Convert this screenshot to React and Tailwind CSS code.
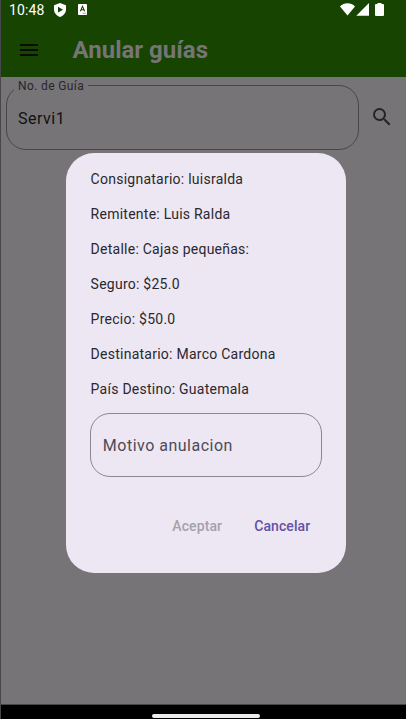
const details = [
  'Consignatario: luisralda',
  'Remitente: Luis Ralda',
  'Detalle: Cajas pequeñas:',
  'Seguro: $25.0',
  'Precio: $50.0',
  'Destinatario: Marco Cardona',
  'País Destino: Guatemala',
];

function StatusBar() {
  return (
    <div className="flex h-[22px] items-start justify-between pl-2 pr-[22px] text-white">
      <div className="flex items-start">
        <span className="w-[45px] pt-px text-[14px] leading-[19px] tracking-[0.1px]">10:48</span>
        <svg className="mt-[3px] h-[14px] w-3" viewBox="0 0 12 14">
          <path d="M6 0 12 2.2V6.5C12 10 9.5 12.8 6 14 2.5 12.8 0 10 0 6.5V2.2Z" fill="#fff" />
          <path d="M4 3.8 9 6.7 4 9.6Z" fill="#174400" />
        </svg>
        <svg className="ml-3 mt-[4px] h-[11px] w-[9px]" viewBox="0 0 9 11">
          <rect width="9" height="11" rx="0.8" fill="#fff" />
          <path d="M2.4 7.2 4.5 2.4 6.6 7.2M3 5.7H6" fill="none" stroke="#174400" strokeWidth="1.1" />
          <path d="M4.5 9.3H8" stroke="#7f9673" strokeWidth="0.8" />
        </svg>
      </div>
      <div className="flex items-start pt-[3px]">
        <svg className="h-[13px] w-[15px]" viewBox="0 0 15 13">
          <path d="M0 3.4C4-.9 11-.9 15 3.4L7.5 12.6Z" fill="#fff" />
        </svg>
        <svg className="ml-px h-[13px] w-[13px]" viewBox="0 0 13 13">
          <path d="M13 0V12.7H.3Z" fill="#fff" />
        </svg>
        <svg className="ml-[6px] h-[13px] w-[9px]" viewBox="0 0 9 13">
          <path d="M2.5 1V0H6.5V1H8Q9 1 9 2V12Q9 13 8 13H1Q0 13 0 12V2Q0 1 1 1Z" fill="#fff" />
        </svg>
      </div>
    </div>
  );
}

function AnnulDialog() {
  return (
    <div className="absolute left-[66.3px] top-[152.7px] flex h-[420.8px] w-[280px] flex-col rounded-[28px] bg-[#ede7f4] px-6 pt-[9px] text-[14px] text-[#2a282d]">
      {details.map((line) => (
        <p key={line} className="h-[35px] whitespace-nowrap pl-[0.3px] leading-[35px] tracking-[0.25px]">
          {line}
        </p>
      ))}
      <div className="mt-[6.8px] flex h-16 w-[232px] shrink-0 items-center rounded-[20px] border border-[#8b8690] px-[11.5px] pt-px text-[16px] tracking-[0.5px] text-[#4f4a55]">
        Motivo anulacion
      </div>
      <div className="mt-[29px] flex h-10 items-center justify-end gap-8 pr-3 font-medium tracking-[0.1px]">
        <button className="text-[#a5a0ab]">Aceptar</button>
        <button className="text-[#6450a4]">Cancelar</button>
      </div>
    </div>
  );
}

export default function App() {
  return (
    <div className="relative flex h-[719px] w-[406px] flex-col overflow-hidden border-l border-[#45474a] bg-[#767477] font-[Roboto,sans-serif]">
      <header className="h-[77px] shrink-0 bg-[#174400]">
        <StatusBar />
        <div className="flex h-[55px] items-center pl-[18.5px]">
          <svg className="h-3 w-[18px]" viewBox="0 0 18 12">
            <path d="M0 1H18M0 6H18M0 11H18" stroke="#080d05" strokeWidth="1.8" />
          </svg>
          <h1 className="ml-[35px] text-[24px] font-bold leading-8 text-[#767477]">Anular guías</h1>
        </div>
      </header>
      <main className="flex flex-1 items-start pl-[4.5px] pt-2">
        <div className="relative flex h-[65px] w-[353.5px] items-center rounded-[20px] border border-[#48464a] pl-[11.5px] pt-[3px] text-[16px] tracking-[0.5px] text-[#111012]">
          Servi1
          <span className="absolute -top-2 left-[7.5px] h-[13px] w-[74px] bg-[#767477] pl-1 text-[12px] leading-[16px] tracking-[0.38px] text-[#29272b]">
            No. de Guía
          </span>
        </div>
        <svg className="ml-[11px] mt-5 h-6 w-6" viewBox="0 0 24 24">
          <path
            d="M15.5 14h-.79l-.28-.27A6.47 6.47 0 0 0 16 9.5 6.5 6.5 0 1 0 9.5 16c1.61 0 3.09-.59 4.23-1.57l.27.28v.79l5 4.99L20.49 19l-4.99-5zm-6 0a4.5 4.5 0 1 1 0-9 4.5 4.5 0 0 1 0 9z"
            fill="#252327"
          />
        </svg>
      </main>
      <footer className="flex h-[15px] shrink-0 justify-center border-t border-[#484649] bg-black pl-[5px] pt-[9px]">
        <div className="h-[4px] w-[108px] rounded-full bg-[#ececec]" />
      </footer>
      <div className="absolute inset-0 -left-px">
        <AnnulDialog />
      </div>
    </div>
  );
}
